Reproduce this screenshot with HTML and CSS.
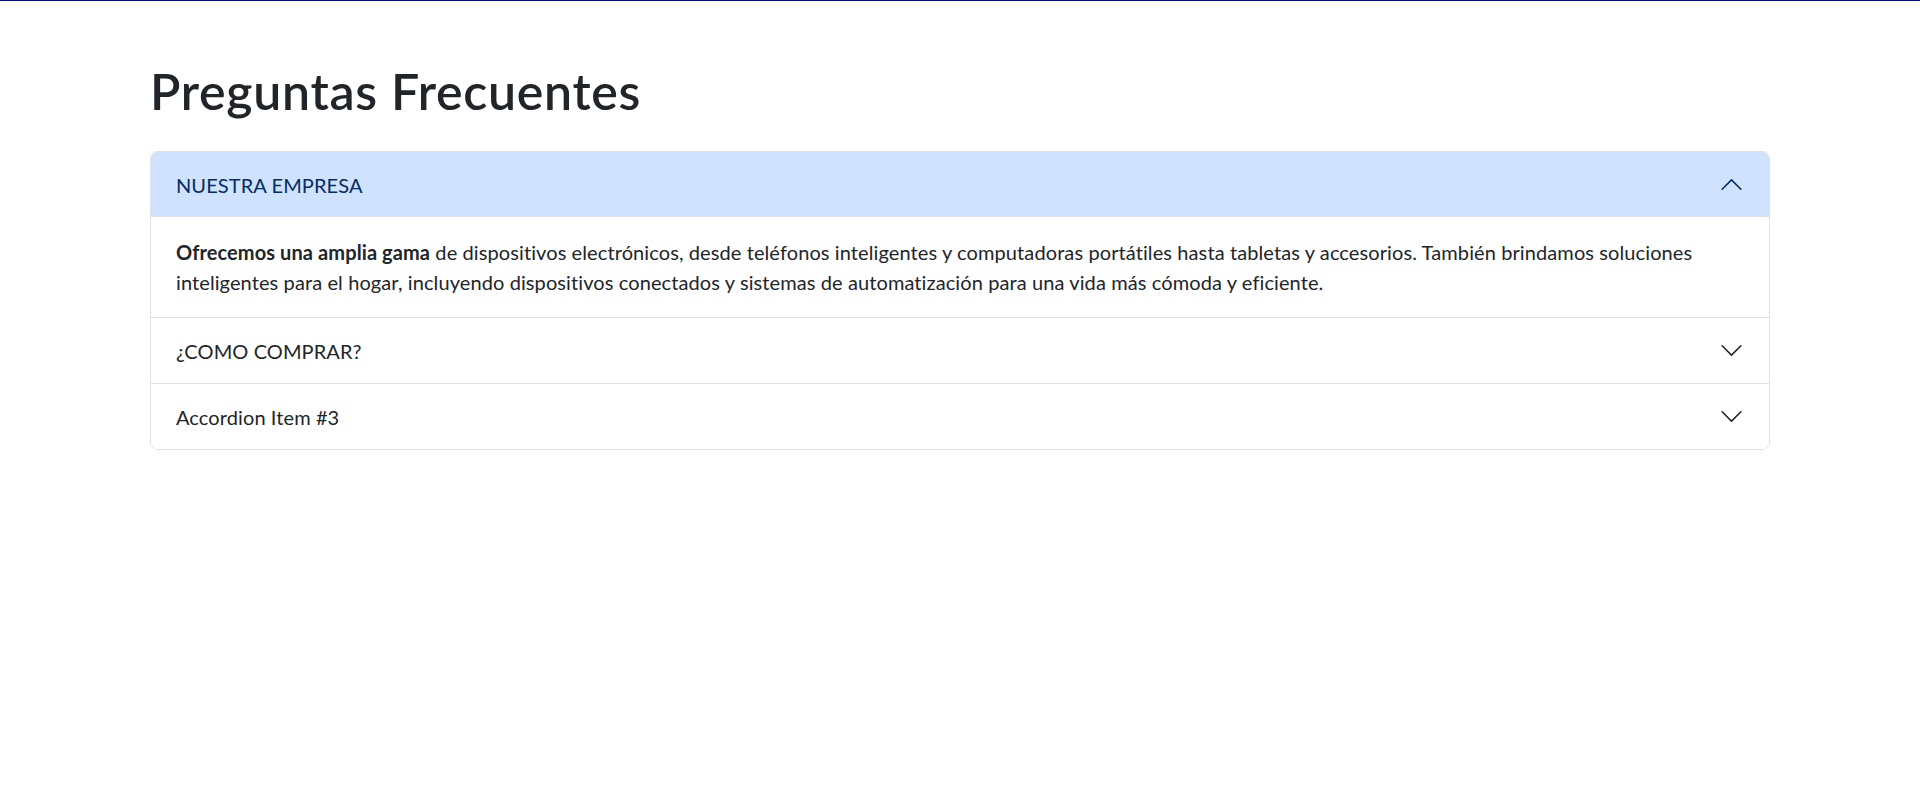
FILE: index.html
```html
<!DOCTYPE html>
<html lang="es">
<head>
<meta charset="utf-8">
<title>Preguntas Frecuentes</title>
<link rel="stylesheet" href="styles.css">
</head>
<body>
<div class="topline"></div>
<main class="container">
  <h1 class="title">Preguntas Frecuentes</h1>
  <div class="accordion">
    <div class="accordion-item">
      <h2 class="accordion-header">
        <button class="accordion-button open" type="button">
          <span>NUESTRA EMPRESA</span>
          <svg class="chev" viewBox="0 0 16 16" width="25" height="25"><path d="M1.646 4.646a.5.5 0 0 1 .708 0L8 10.293l5.646-5.647a.5.5 0 0 1 .708.708l-6 6a.5.5 0 0 1-.708 0l-6-6a.5.5 0 0 1 0-.708z"/></svg>
        </button>
      </h2>
      <div class="accordion-body">
        <p class="body-text"><strong>Ofrecemos una amplia gama</strong> de dispositivos electrónicos, desde teléfonos inteligentes y computadoras portátiles hasta tabletas y accesorios. También brindamos soluciones inteligentes para el hogar, incluyendo dispositivos conectados y sistemas de automatización para una vida más cómoda y eficiente.</p>
      </div>
    </div>
    <div class="accordion-item">
      <h2 class="accordion-header">
        <button class="accordion-button" type="button">
          <span>¿COMO COMPRAR?</span>
          <svg class="chev" viewBox="0 0 16 16" width="25" height="25"><path d="M1.646 4.646a.5.5 0 0 1 .708 0L8 10.293l5.646-5.647a.5.5 0 0 1 .708.708l-6 6a.5.5 0 0 1-.708 0l-6-6a.5.5 0 0 1 0-.708z"/></svg>
        </button>
      </h2>
    </div>
    <div class="accordion-item">
      <h2 class="accordion-header">
        <button class="accordion-button" type="button">
          <span>Accordion Item #3</span>
          <svg class="chev" viewBox="0 0 16 16" width="25" height="25"><path d="M1.646 4.646a.5.5 0 0 1 .708 0L8 10.293l5.646-5.647a.5.5 0 0 1 .708.708l-6 6a.5.5 0 0 1-.708 0l-6-6a.5.5 0 0 1 0-.708z"/></svg>
        </button>
      </h2>
    </div>
  </div>
</main>
</body>
</html>
```
FILE: styles.css
```css
* { box-sizing: border-box; }

html, body {
  margin: 0;
  background: #fff;
}

body {
  font-family: Lato, "Liberation Sans", sans-serif;
  font-size: 20px;
  line-height: 30px;
  color: #212529;
}

.topline {
  height: 1px;
  background: #0a0a78;
}

.container {
  max-width: 1650px;
  margin: 0 auto;
  padding: 0 15px;
}

.title {
  margin: 60px 0 30px;
  font-size: 50px;
  font-weight: 600;
  line-height: 60px;
  letter-spacing: 0.7px;
  color: #212529;
}

.accordion {
  border: 1px solid #dee2e6;
  border-radius: 7.5px;
  overflow: hidden;
}

.accordion-item + .accordion-item {
  border-top: 1px solid #dee2e6;
}

.accordion-header {
  margin: 0;
  font-size: 20px;
  font-weight: 400;
}

.accordion-button {
  display: flex;
  align-items: center;
  width: 100%;
  padding: 21px 25px 19px;
  border: 0;
  background: #fff;
  color: #212529;
  font-family: inherit;
  font-size: 20px;
  line-height: 25px;
  letter-spacing: 0.1px;
  text-align: left;
  cursor: pointer;
}

.accordion-button .chev {
  margin-left: auto;
  flex-shrink: 0;
  fill: #212529;
  margin-top: -2px;
}

.accordion-button.open {
  background: #cfe2ff;
  color: #052c65;
  box-shadow: inset 0 -1px 0 #dee2e6;
}

.accordion-button.open .chev {
  fill: #052c65;
  transform: rotate(-180deg);
}

.accordion-body {
  padding: 20px 25px;
  letter-spacing: 0.1px;
}

.body-text {
  margin: 0;
}

.body-text strong {
  font-weight: 700;
}
```
